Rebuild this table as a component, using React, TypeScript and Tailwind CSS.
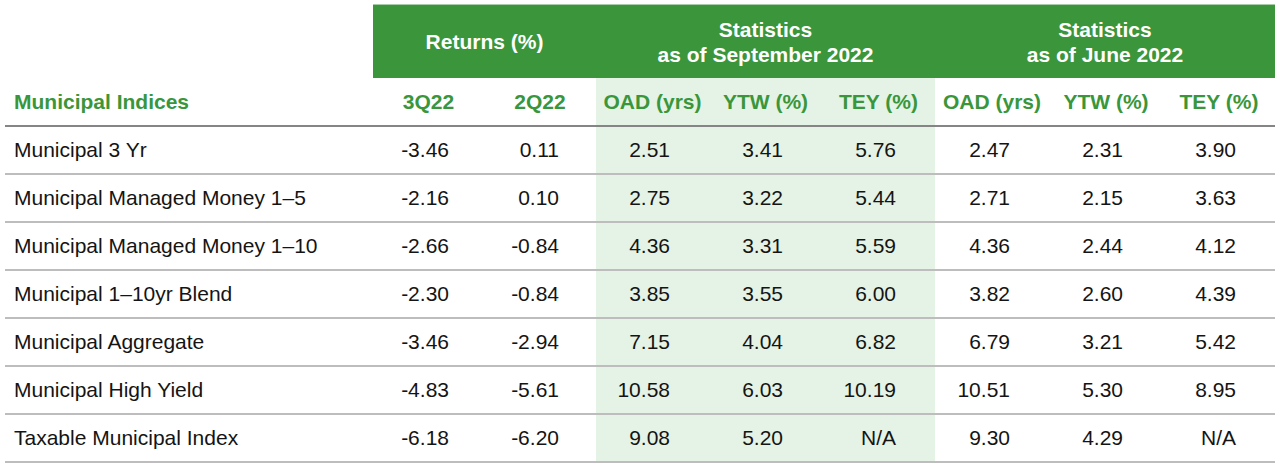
import React from "react";

const rows = [
  { name: "Municipal 3 Yr", v: ["-3.46", "0.11", "2.51", "3.41", "5.76", "2.47", "2.31", "3.90"] },
  { name: "Municipal Managed Money 1–5", v: ["-2.16", "0.10", "2.75", "3.22", "5.44", "2.71", "2.15", "3.63"] },
  { name: "Municipal Managed Money 1–10", v: ["-2.66", "-0.84", "4.36", "3.31", "5.59", "4.36", "2.44", "4.12"] },
  { name: "Municipal 1–10yr Blend", v: ["-2.30", "-0.84", "3.85", "3.55", "6.00", "3.82", "2.60", "4.39"] },
  { name: "Municipal Aggregate", v: ["-3.46", "-2.94", "7.15", "4.04", "6.82", "6.79", "3.21", "5.42"] },
  { name: "Municipal High Yield", v: ["-4.83", "-5.61", "10.58", "6.03", "10.19", "10.51", "5.30", "8.95"] },
  { name: "Taxable Municipal Index", v: ["-6.18", "-6.20", "9.08", "5.20", "N/A", "9.30", "4.29", "N/A"] },
];

const subHeads = ["3Q22", "2Q22", "OAD (yrs)", "YTW (%)", "TEY (%)", "OAD (yrs)", "YTW (%)", "TEY (%)"];

// right padding per value column so numbers line up under their heading
const pad = ["pr-[35px]", "pr-[37px]", "pr-[39px]", "pr-[39px]", "pr-[39px]", "pr-[39px]", "pr-[40px]", "pr-[39px]"];

const isBand = (i: number) => i >= 2 && i <= 4;

export default function App() {
  return (
    <div
      className="w-[1280px] h-[473px] bg-white pt-[4px] pl-[5px] text-[21px] text-[#141414]"
      style={{ fontFamily: '"Liberation Sans", Arial, sans-serif' }}
    >
      <div className="grid grid-cols-[368px_111px_112px_113px_113px_113px_114px_114px_112px]">
        {/* group header */}
        <div />
        <div className="col-span-2 h-[74px] border-t border-[#a6cda6] bg-[#3a953b] text-white font-bold flex items-center justify-center">
          Returns (%)
        </div>
        <div className="col-span-3 h-[74px] border-t border-[#a6cda6] bg-[#3a953b] text-white font-bold flex flex-col items-center justify-center leading-[25px]">
          <span>Statistics</span>
          <span>as of September 2022</span>
        </div>
        <div className="col-span-3 h-[74px] border-t border-[#a6cda6] bg-[#3a953b] text-white font-bold flex flex-col items-center justify-center leading-[25px]">
          <span>Statistics</span>
          <span>as of June 2022</span>
        </div>

        {/* column header */}
        <div className="h-[49px] border-b-2 border-[#858585] flex items-center pl-[9px] font-bold text-[#3a963b]">
          Municipal Indices
        </div>
        {subHeads.map((h, i) => (
          <div
            key={i}
            className={`h-[49px] border-b-2 border-[#858585] flex items-center justify-center font-bold text-[#3a963b] ${
              isBand(i) ? "bg-[#e4f3e5]" : ""
            }`}
          >
            {h}
          </div>
        ))}

        {/* body */}
        {rows.map((r) => (
          <React.Fragment key={r.name}>
            <div className="h-[48px] border-b-2 border-[#bdbdbd] flex items-center pl-[9px]">{r.name}</div>
            {r.v.map((val, i) => (
              <div
                key={i}
                className={`h-[48px] border-b-2 border-[#bdbdbd] flex items-center justify-end ${pad[i]} ${
                  isBand(i) ? "bg-[#e4f3e5]" : ""
                }`}
              >
                {val}
              </div>
            ))}
          </React.Fragment>
        ))}
      </div>
    </div>
  );
}
